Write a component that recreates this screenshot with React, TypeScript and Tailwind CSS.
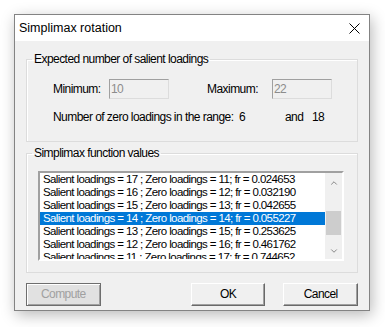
import { ChevronDown, ChevronUp } from "lucide-react";

const rows = [
  { salient: 17, zero: 11, fr: "0.024653" },
  { salient: 16, zero: 12, fr: "0.032190" },
  { salient: 15, zero: 13, fr: "0.042655" },
  { salient: 14, zero: 14, fr: "0.055227" },
  { salient: 13, zero: 15, fr: "0.253625" },
  { salient: 12, zero: 16, fr: "0.461762" },
  { salient: 11, zero: 17, fr: "0.744652" },
];

const Simplimax = () => {
  return (
    <div className="min-h-screen bg-white pl-[14px] pt-[14px]">
      <div className="flex h-[297px] w-[356px] flex-col border border-[#838383] bg-[#f0f0f0] shadow-[2px_4px_14px_rgba(0,0,0,0.28)]">
        {/* Title bar */}
        <div className="flex h-[26px] items-center justify-between bg-white pl-[4px] pr-[9px] font-['Liberation_Sans',sans-serif] text-[12.5px] text-black">
          <span>Simplimax rotation</span>
          <svg width="11" height="11" viewBox="0 0 11 11" className="text-black">
            <path d="M0.5 0.5 L10.5 10.5 M10.5 0.5 L0.5 10.5" stroke="currentColor" strokeWidth="1" />
          </svg>
        </div>

        <div className="whitespace-nowrap px-[11px] font-['Liberation_Sans',sans-serif] text-[12px] leading-[13px] tracking-[-0.55px] text-black">
          {/* Expected number of salient loadings */}
          <fieldset className="mt-[12px] h-[89px] w-[332px] border border-[#dcdcdc] shadow-[inset_1px_1px_0_#fff]">
            <legend className="ml-[5px] px-[2px] leading-[12px]">Expected number of salient loadings</legend>
            <div className="mt-[14px] flex items-center pl-[26px]">
              <span className="w-[56px]">Minimum:</span>
              <div className="h-[20px] w-[60px] border border-t-[#a0a0a0] border-l-[#a0a0a0] border-r-[#dcdcdc] border-b-[#dcdcdc] pl-[1px] pt-[3px] text-[#8c8c8c]">
                10
              </div>
              <span className="ml-[38px] w-[65px]">Maximum:</span>
              <div className="h-[20px] w-[60px] border border-t-[#a0a0a0] border-l-[#a0a0a0] border-r-[#dcdcdc] border-b-[#dcdcdc] pl-[1px] pt-[3px] text-[#8c8c8c]">
                22
              </div>
            </div>
            <div className="mt-[12px] flex pl-[26px]">
              <span className="w-[186px]">Number of zero loadings in the range:</span>
              <span className="w-[46px]">6</span>
              <span className="w-[27px]">and</span>
              <span>18</span>
            </div>
          </fieldset>

          {/* Simplimax function values */}
          <fieldset className="mt-[5px] h-[126px] w-[332px] border border-[#dcdcdc] shadow-[inset_1px_1px_0_#fff]">
            <legend className="ml-[5px] px-[2px] leading-[12px]">Simplimax function values</legend>
            <div className="ml-[11px] mt-[12px] flex h-[90px] w-[306px] border-2 border-t-[#a0a0a0] border-l-[#a0a0a0] border-r-white border-b-white bg-white">
              <div className="flex-1 overflow-hidden text-[11.5px] tracking-[-0.6px]">
                {rows.map((r) => (
                  <div
                    key={r.salient}
                    className={
                      r.salient === 14
                        ? "h-[13px] bg-[#0078d7] pl-[3px] text-white"
                        : "h-[13px] pl-[3px]"
                    }
                  >
                    Salient loadings = {r.salient} ; Zero loadings = {r.zero}; fr = {r.fr}
                  </div>
                ))}
              </div>
              <div className="flex w-[17px] flex-col items-center bg-[#f0f0f0]">
                <ChevronUp size={10} strokeWidth={1.75} className="mt-[5px] text-[#606060]" />
                <div className="mt-[23px] h-[24px] w-[15px] bg-[#cdcdcd]" />
                <ChevronDown size={10} strokeWidth={1.75} className="mt-[11px] text-[#606060]" />
              </div>
            </div>
          </fieldset>

          {/* Buttons */}
          <div className="mt-[10px] flex">
            <button className="h-[23px] w-[75px] border border-[#6e6e6e] bg-[#e1e1e1] text-[#a0a0a0] shadow-[inset_1px_1px_0_#fff,inset_-1px_-1px_0_#a0a0a0]">
              Compute
            </button>
            <button className="ml-[90px] h-[23px] w-[75px] border border-t-white border-l-white border-r-[#696969] border-b-[#696969] bg-[#f0f0f0] shadow-[inset_-1px_-1px_0_#a0a0a0]">
              OK
            </button>
            <button className="ml-[18px] h-[23px] w-[75px] border border-t-white border-l-white border-r-[#696969] border-b-[#696969] bg-[#f0f0f0] shadow-[inset_-1px_-1px_0_#a0a0a0]">
              Cancel
            </button>
          </div>
        </div>
      </div>
    </div>
  );
};

export default function App() {
  return <Simplimax />;
}
